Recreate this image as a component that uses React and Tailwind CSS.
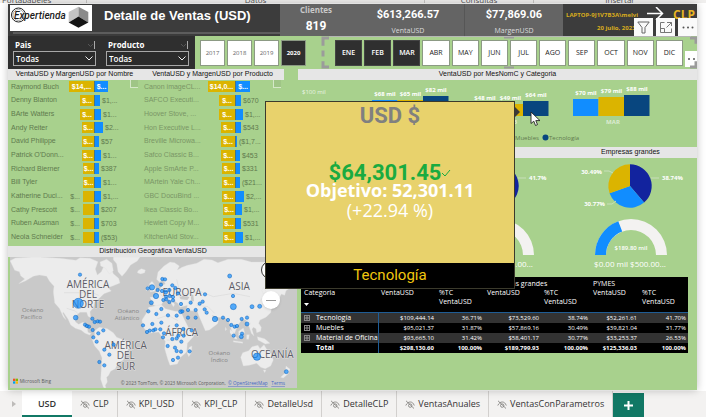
import React from 'react';

const SEGOE = "font-['Open_Sans','Noto_Sans',sans-serif]";
const DIN = "font-[Roboto,sans-serif]";
const ARIAL = "font-['Liberation_Sans',Arial,sans-serif]";

const customers = [
  ['Raymond Buch', 25, '$14,...', 14, '$...', 'full'],
  ['Denny Blanton', 14, '$...', 6, '$1,...'],
  ['BArte Watters', 14, '$...', 7, '$1...'],
  ['Andy Reiter', 12, '$...', 9, '$2...'],
  ['David Philippe', 12, '$...', 5, '$57'],
  ["Patrick O'Donn...", 12, '$...', 7, '$1...'],
  ['Richard Bierner', 11, '$...', 5, '$387'],
  ['Bill Tyler', 11, '$...', 7, '$1...'],
  ['Katherine Duci...', 11, '$...', 7, '$1,...', 'out'],
  ['Cathy Prescott', 11, '$...', 5, '$207', 'out'],
  ['Ruben Ausman', 11, '$...', 5, '$703', 'out'],
  ['Neola Schneider', 11, '$...', 5, '($53)', 'out'],
];

const products = [
  ['Canon imageCL...', 27, '$14,0...', 15, '$...', 'full'],
  ['SAFCO Executi...', 16, '$...', 6, '$670'],
  ['Hoover Stove, ...', 16, '$...', 8, '$1,...'],
  ['Hon Executive L...', 14, '$...', 6, '$543'],
  ['Breville Microwa...', 14, '$...', 2, '($1,7...'],
  ['Safco Classic B...', 14, '$...', 5, '$453'],
  ['Apple SmArte P...', 13, '$...', 5, '$331'],
  ['MArtein Yale Ch...', 13, '$...', 5, '($21...'],
  ['GBC DocuBind ...', 13, '$...', 9, '$2,...'],
  ['Ikea Classic Bo...', 12, '$...', 7, '$1,...'],
  ['Hewlett Copy M...', 12, '$...', 6, '$531'],
  ['KitchenAid Stov...', 12, '$...', 8, '$1,...'],
];

const months = ['ENE', 'FEB', 'MAR', 'ABR', 'MAY', 'JUN', 'JUL', 'AGO', 'SEP', 'OCT', 'NOV', 'DIC'];
const years = ['2017', '2018', '2019', '2020'];

const salesRows = [
  ['Tecnología', '$109,444.14', '36.71%', '$73,529.60', '38.74%', '$52,261.61', '41.70%'],
  ['Muebles', '$95,021.37', '31.87%', '$57,869.16', '30.49%', '$39,821.04', '31.77%'],
  ['Material de Oficina', '$93,665.10', '31.42%', '$58,401.17', '30.77%', '$33,253.37', '26.53%'],
];

const tabs = ['CLP', 'KPI_USD', 'KPI_CLP', 'DetalleUsd', 'DetalleCLP', 'VentasAnuales', 'VentasConParametros'];

const cities = [
  [240, 104, 5], [235, 190, 15], [227, 233, 7], [277, 236, 5], [284, 246, 5], [293, 244, 5], [300, 245, 5],
  [255, 254, 5], [261, 258, 5], [267, 260, 5], [278, 270, 5], [295, 280, 5], [310, 271, 5], [280, 292, 5],
  [290, 305, 5], [341, 314, 5], [313, 329, 5], [328, 344, 5], [298, 366, 5], [313, 376, 5],
  [443, 145, 5], [456, 142, 8], [487, 117, 5], [495, 118, 5], [483, 134, 5], [473, 150, 5], [517, 136, 5],
  [526, 144, 5], [468, 168, 8], [454, 188, 6], [486, 153, 5], [497, 156, 6], [508, 150, 5], [498, 170, 5],
  [509, 168, 5], [519, 171, 5], [490, 180, 5], [499, 178, 5], [508, 186, 5], [519, 181, 5], [534, 160, 5],
  [445, 214, 5], [484, 207, 5], [469, 222, 5], [504, 226, 5], [530, 227, 5], [543, 192, 5], [572, 188, 5],
  [542, 215, 6], [547, 214, 5], [564, 210, 5], [564, 233, 5], [587, 210, 5], [587, 233, 5], [599, 191, 5],
  [608, 185, 5], [615, 163, 5], [614, 208, 5], [620, 218, 5], [645, 237, 8], [669, 233, 5], [684, 240, 5],
  [429, 256, 5], [457, 252, 5], [484, 248, 5], [441, 276, 5], [449, 272, 5], [460, 271, 5], [466, 268, 5],
  [481, 268, 5], [492, 280, 5], [489, 292, 5], [530, 256, 5], [550, 267, 5], [575, 271, 5], [517, 297, 5],
  [530, 295, 5], [535, 287, 5], [551, 287, 5], [544, 305, 5], [503, 318, 5], [525, 323, 5], [530, 333, 5],
  [543, 335, 5], [569, 334, 5], [534, 353, 5], [519, 360, 5], [689, 108, 6], [699, 168, 5], [700, 200, 9],
  [756, 200, 6], [779, 199, 6], [694, 255, 5], [704, 260, 5], [711, 258, 5], [725, 237, 5], [741, 233, 5],
  [741, 252, 6], [701, 287, 5], [726, 281, 5], [724, 290, 6], [771, 350, 11], [859, 395, 6],
];

function Logo() {
  return (
    <svg className="h-[26px] w-[82px] shrink-0 bg-white" viewBox="0 0 82 26" role="img" aria-label="Expertienda">
      <circle cx="8.500" cy="10" r="7" fill="none" stroke="#222" strokeWidth="1" />
      <circle cx="8.500" cy="10" r="5.500" fill="none" stroke="#777" strokeWidth="0.600" />
      <text x="4" y="14" fontFamily="Roboto, sans-serif" fontStyle="italic" fontWeight="500" fontSize="10" fill="#1c1c1c">Expertienda</text>
      <path d="M68.500 1.700 58.700 7v10.500l9.800-6z" fill="#c4c4c4" />
      <path d="M68.500 1.700 78.300 7v10.500l-9.800-6z" fill="#8b8b8b" />
      <path d="M68.500 11.500 78.300 17.500 68.500 22.700 58.700 17.500z" fill="#141414" />
    </svg>
  );
}

function Slicer({ id, label }) {
  return (
    <div className="flex w-[93px] flex-col px-[5px] pt-[3px]">
      <div className="flex h-[12px] items-center justify-between">
        <label htmlFor={id} className="pl-[2px] text-[8px] font-bold leading-[10px] text-white">{label}</label>
        <svg className="h-[8px] w-[9px]" viewBox="0 0 9 8" fill="none" stroke="#777">
          <path d="M1 3l2.500 2.500L6 3" stroke="#555" />
          <path d="M7.500 0v8" stroke="#aaa" />
        </svg>
      </div>
      <div className="relative">
        <select id={id} className="block h-[15px] w-full appearance-none border border-[#a8a8a8] bg-[#2b2b2b] px-[2px] text-[8px] font-semibold leading-[10px] text-white">
          <option>Todas</option>
        </select>
        <svg className="pointer-events-none absolute right-[3px] top-[5px] h-[5px] w-[8px]" viewBox="0 0 8 5" fill="none" stroke="#eee">
          <path d="M.5.500 4 4 7.500.500" />
        </svg>
      </div>
    </div>
  );
}

function PanelTitle({ children }) {
  return (
    <h2 className={`h-[11px] overflow-hidden whitespace-nowrap bg-[#e6e6e6] text-center text-[7px] leading-[9px] text-[#111] ${ARIAL}`}>{children}</h2>
  );
}

function Tornado({ title, rows, compact }) {
  return (
    <section className="relative min-w-0">
      <PanelTitle>{title}</PanelTitle>
      <span className="absolute right-[3px] top-[11px] h-[8px] w-[8px] border-b border-l border-[#d5e8c8] bg-[#9fc586]" />
      <div className={`grid h-[166px] grid-rows-12 pb-[2px] text-[#607a4e] ${ARIAL}`}>
        {rows.map(([name, sale, saleText, margin, marginText, mode]) => (
          <div key={name} className="flex items-center">
            <span className={compact ? 'w-[56px] shrink-0 whitespace-nowrap pl-[3px] text-[7px] leading-[12px] text-[#7a9666]' : 'w-[56px] shrink-0 whitespace-nowrap pl-[3px] text-[7px] leading-[12px]'}>{name}</span>
            <span className={compact ? 'flex w-[38px] shrink-0 justify-end' : 'flex w-[30px] shrink-0 justify-end'}>
              {mode === 'out' && <span className="mr-[3px] text-[7px] leading-[11px]">{saleText}</span>}
              <span className="h-[11px] overflow-hidden whitespace-nowrap bg-[#dbb400] text-center text-[7px] font-bold leading-[11px] text-white" style={{ width: sale }}>
                {mode !== 'out' && saleText}
              </span>
            </span>
            <span className="h-[11px] shrink-0 overflow-hidden border-l border-[#46748a] bg-[#118dff] text-center text-[7px] font-bold leading-[11px] text-white" style={{ width: margin }}>
              {mode === 'full' && marginText}
            </span>
            {mode !== 'full' && <span className="ml-[2px] whitespace-nowrap text-[7px] leading-[11px]">{marginText}</span>}
          </div>
        ))}
      </div>
    </section>
  );
}

function WorldMap() {
  return (
    <svg className="block w-full" viewBox="30 51 861 393" role="img" aria-label="Distribución Geográfica VentaUSD">
      <rect x="30" y="51" width="861" height="393" fill="#c9c9c9" />
      <g fill="#ececec" stroke="#dedede" strokeWidth="1">
        <path d="M30 62l16-8 50-3h24l60 4 48 6 12-8 30 2 24 10-8 22 6 18 12-10 10-22 18 8 8 20 16 14 4 14-20 8-16 6 10 10-22 8-14 14-14 12-4 16-10 12 2 18-8-4-4-12-20 0-12 10-2 18 10 8 12-6 8 2-4 12 10 4 2 12 10 4-6 4-14-6-10-8-18-6-14-10-8-18-14-20-2 2 10 20-8-8-12-26-14-16-4-34 2-16-14-16-8-14-22-4-18 4-24 14-20 8 18-14-12-10-4-12-14-4z" />
        <path d="M340 51h80l-8 12-20 12-14 20-12 14-12-14-4-24-10-12z" />
        <path d="M300 66l20-8 16 12 4 22-12 10-12-18-14-6z" />
        <path d="M414 92l10-6 12 4-2 8-12 4-10-4z" />
        <path d="M284 272l14-10 24 4 18 12 10 14 22 8 18 10-2 14-12 16-6 20-16 8-8 18-14 8-6 12-6 6 2 14-6 10 2 10-8-4-8-24 2-34 2-30-8-20-14-16-8-20 8-12z" />
        <path d="M448 132l8-8 6 8 6 14-4 8-14 2 4-10z" /><path d="M438 142l8-4 2 10-10 4z" />
        <path d="M450 172l16-2-2-10 14-8 8-16 10-4-6-12-12 6-8-8 4-22 18-18 18-12 14 2 14 10-6 12 14-8 16-6 28-6 22-12 24 2 18 8 30-10 40 0 30 8h80l80 0v26l-14 10-14 14-12 10-4 18-12 8-4 14-10-4-8 16 0 18-8 2-6-16-12 4 6 12-4 20-14 14-18 8-4 10 8 12-2 12-12 4-2-12-8-4-4 6 6 20-8-8-6-18-10-22-12-2-14 20-8 22-8-4-8-28-12-14-22-2-18-6 6 12 14 4-4 10-24 18-12 2-20-46-4-12-18-2-14-4 2-12-16 4-6 2-6-12-12-8-8-10 10 22-4 6-12-20-14-2-10 16-14 6-10-6z" />
        <path d="M446 202l38-8 12 12 30 8 16 0 10 22 16 32 20 2-8 20-18 20-2 26-18 16-10 20-22 4-6-16-10-34 2-22-12-16-8-12-30 4-18-20-2-20 14-22z" />
        <path d="M568 322l8-4-2 20-8 12-4-10z" />
        <path d="M722 352l6-14 18-6 10-12 18-4 6 10 12-12 8 14 12 12 8 20-8 18-16 8-14-4-12-12-22 6-18 2z" />
        <path d="M690 268l12 12 10 18-8-2-14-18zM716 274l14-10 4 14-8 14-10-4zM740 284l8 0-2 14-6 0zM772 290l22 6 16 14-14 2-22-12zM700 302l28 4v4l-28-4z" />
        <path d="M784 176l6 8-2 12-16 6-6-4 12-8zM786 152l4-10 8 12-8 8zM740 226l8-2-2 18 6 10-8 2zM676 262l4 6-4 4z" />
        <path d="M858 378l12 10-6 14-14 12-8-2 14-14zM790 390l8 0-4 8z" />
      </g>
      <path d="M538 170l16-4 14 6-6 8-20-2zM572 164l8 0 2 20-8 0z" fill="#c9c9c9" />
      <g fill="none" stroke="#d4d4d4" strokeWidth="1.500">
        <path d="M192 158h86l18 8M200 205l26 8 10 10M468 146l20 24 20-12M530 118l8 34 22 10 40-8 40 16 60-10 50 10M590 196l34 4 20 20M472 236l32-10 30 16M500 300l40 2" />
      </g>
      <g fontFamily="'Open Sans', 'Noto Sans', sans-serif" textAnchor="middle" fill="#5c5c66" stroke="#f2f2f2" strokeWidth="2" paintOrder="stroke" fontSize="30">
        <text x="264" y="143">AMÉRICA</text>
        <text x="264" y="174">DEL</text>
        <text x="264" y="205">NORTE</text>
        <text x="377" y="327">AMÉRICA</text>
        <text x="377" y="358">DEL</text>
        <text x="377" y="389">SUR</text>
        <text x="546" y="167">EUROPA</text>
        <text x="718" y="150">ASIA</text>
        <text x="545" y="289">ÁFRICA</text>
        <text x="817" y="355">OCEANÍA</text>
      </g>
      <g fontFamily="'Open Sans', 'Noto Sans', sans-serif" textAnchor="middle" fill="#858585" fontSize="18">
        <text x="98" y="215">Océano</text>
        <text x="94" y="236">Pacífico</text>
        <text x="385" y="219">Océano</text>
        <text x="381" y="240">Atlántico</text>
        <text x="658" y="345">Océano</text>
        <text x="658" y="366">Índico</text>
      </g>
      <g fill="#118dff" fillOpacity="0.700" stroke="#0f63b8" strokeWidth="1.500">
        {cities.map(([x, y, r]) => <circle key={`${x}-${y}`} cx={x} cy={y} r={r} />)}
      </g>
      <path d="M39 416h7v7h-7z" fill="#f25022" /><path d="M47 416h7v7h-7z" fill="#7fba00" />
      <path d="M39 424h7v7h-7z" fill="#00a4ef" /><path d="M47 424h7v7h-7z" fill="#ffb900" />
      <g fontFamily="'Open Sans', 'Noto Sans', sans-serif" fontSize="14" fill="#5a5a5a">
        <text x="59" y="429">Microsoft Bing</text>
        <text x="677" y="435" textAnchor="end">© 2023 TomTom, © 2023 Microsoft Corporation,</text>
        <a href="#osm"><text x="684" y="435" fill="#4468c4" textDecoration="underline">© OpenStreetMap</text></a>
        <a href="#terms"><text x="814" y="435" fill="#4468c4" textDecoration="underline">Terms</text></a>
      </g>
    </svg>
  );
}

function MonthChart() {
  const groups = [
    { x: 74, label: 'ENE', values: [68, 65, 82] },
    { x: 174, label: 'FEB', values: [48, 49, 64] },
    { x: 275, label: 'MAR', values: [70, 79, 88] },
  ];
  const colors = ['#118dff', '#dbb400', '#08467f'];
  return (
    <svg className="block w-full" viewBox="0 0 399 67" fontFamily="'Open Sans', 'Noto Sans', sans-serif" fontSize="6">
      <text x="4" y="14" fill="#eaf4e3">$100 mil</text>
      {groups.map((g) => (
        <g key={g.label} fontWeight="700" textAnchor="middle" fill="#fff">
          {g.values.map((v, i) => {
            const h = Math.round(v * 0.24);
            return (
              <g key={v}>
                <rect x={g.x + i * 25.5} y={36 - h} width="25.500" height={h} fill={colors[i]} />
                <text x={g.x + i * 25.5 + 13} y={32 - h}>{`$${v} mil`}</text>
              </g>
            );
          })}
          <text x={g.x + 40} y="44" fill="#dcebd2">{g.label}</text>
        </g>
      ))}
      <g fill="#607a4e">
        <circle cx="144" cy="57.500" r="3" fill="#118dff" />
        <text x="148" y="60">Material de Oficina</text>
        <circle cx="212" cy="57.500" r="3" fill="#dbb400" />
        <text x="217" y="60">Muebles</text>
        <circle cx="247.500" cy="57.500" r="3" fill="#08467f" />
        <text x="251" y="60">Tecnología</text>
      </g>
    </svg>
  );
}

function arcPoint(cx, cy, r, turn) {
  const a = turn * Math.PI * 2;
  return `${(cx + r * Math.sin(a)).toFixed(2)} ${(cy - r * Math.cos(a)).toFixed(2)}`;
}

function SegmentPanel({ shares, right, upper, lower, amount, range }) {
  const colors = ['#12239e', '#118dff', '#dbb400'];
  const cx = 66;
  const cy = 28;
  const r = 21.7;
  let start = 0;
  const slices = shares.map((share, i) => {
    const end = start + share;
    const d = `M${cx} ${cy}L${arcPoint(cx, cy, r, start)}A${r} ${r} 0 0 1 ${arcPoint(cx, cy, r, end)}Z`;
    start = end;
    return <path key={colors[i]} d={d} fill={colors[i]} />;
  });
  return (
    <svg className="block w-full" viewBox="0 0 133 119" fontFamily="'Open Sans', 'Noto Sans', sans-serif" fontSize="6" fill="#fff">
      {slices}
      <g fill="none" stroke="#c8dfb9" strokeWidth="1">
        <path d="M87 20h8M40 13h5l4 2M43 46h5l4-3" />
      </g>
      <text x="98" y="22" fontWeight="700">{right}</text>
      <text x="38" y="16" fontWeight="700" textAnchor="end">{upper}</text>
      <text x="41" y="48" fontWeight="700" textAnchor="end">{lower}</text>
      <path d="M31 97A36 36 0 0 1 103 97H92A25 25 0 0 0 42 97Z" fill="#f3f2f1" />
      <path d="M31 97A36 36 0 0 1 54.300 63.300L58.200 73.600A25 25 0 0 0 42 97Z" fill="#118dff" />
      <text x="67" y="92" textAnchor="middle" fontWeight="600">{amount}</text>
      <text x="66" y="109" textAnchor="middle" fontSize="8">{range}</text>
    </svg>
  );
}

function SalesTable() {
  const value = 'pr-[2px] text-right text-[6px]';
  return (
    <table className="w-full table-fixed border-collapse bg-black text-[7px] leading-[10px] text-white">
      <colgroup>
        <col className="w-[77px]" /><col className="w-[58px]" /><col className="w-[48px]" />
        <col className="w-[57px]" /><col className="w-[49px]" /><col className="w-[49px]" /><col className="w-[49px]" />
      </colgroup>
      <thead className="text-left align-top text-[7px] leading-[9px]">
        <tr className="h-[11px]">
          <th className="font-normal" />
          <th colSpan="2" className="pl-[3px] pt-[2px] font-normal">Consumidor</th>
          <th colSpan="2" className="whitespace-nowrap pl-[3px] pt-[2px] font-normal">Empresas grandes</th>
          <th colSpan="2" className="pl-[3px] pt-[2px] font-normal">PYMES</th>
        </tr>
        <tr className="h-[24px] border-b border-[#1f5c94]">
          <th className="pl-[3px] font-normal">
            Categoria
            <svg className="mt-[6px] block h-[3px] w-[5px]" viewBox="0 0 5 3"><path d="M0 0h5L2.500 3z" fill="#fff" /></svg>
          </th>
          {[0, 1, 2].map((n) => (
            <React.Fragment key={n}>
              <th className="pl-[3px] font-normal">VentaUSD</th>
              <th className="pl-[3px] font-normal">%TC<br />VentaUSD</th>
            </React.Fragment>
          ))}
        </tr>
      </thead>
      <tbody>
        {salesRows.map(([name, ...cells]) => (
          <tr key={name} className="h-[10px] odd:bg-[#333333]">
            <th className="whitespace-nowrap border-r border-[#1f5c94] text-left font-normal">
              <span className="flex items-center">
                <button type="button" aria-label={`Expandir ${name}`} className="ml-[3px] mr-[6px] flex h-[6px] w-[6px] items-center justify-center border border-[#8a8a8a]">
                  <svg className="h-[4px] w-[4px]" viewBox="0 0 4 4" stroke="#aaa" strokeWidth="0.800"><path d="M2 0v4M0 2h4" /></svg>
                </button>
                {name}
              </span>
            </th>
            {cells.map((c) => <td key={c} className={value}>{c}</td>)}
          </tr>
        ))}
        <tr className="h-[10px] font-bold">
          <th className="border-r border-[#1f5c94] pl-[15px] text-left">Total</th>
          {['$298,130.60', '100.00%', '$189,799.93', '100.00%', '$125,336.03', '100.00%'].map((c, i) => <td key={i} className={value}>{c}</td>)}
        </tr>
      </tbody>
    </table>
  );
}

function HiddenIcon() {
  return (
    <svg className="h-[9px] w-[10px]" viewBox="0 0 10 9" fill="none" stroke="#7a7876" strokeWidth="0.800">
      <path d="M.8 5.500C2 2.800 3.600 2 5.300 2s3 1 4 3.500" />
      <circle cx="5.200" cy="5.600" r="1.700" />
      <path d="M1 .800l8 7.700" />
    </svg>
  );
}

export default function App() {
  return (
    <div className={`flex min-h-screen w-full flex-col overflow-hidden bg-white ${SEGOE}`}>
      <div className="flex h-[4px] items-end overflow-hidden border-b border-white bg-[#f0efee] text-[8px] leading-[6px] text-[#555]">
        <span className="w-[87px] border-r border-[#c8c6c4] pl-[2px]">Portapapeles</span>
        <span className="flex-1 border-r border-[#c8c6c4] text-center">Datos</span>
        <span className="w-[109px] border-r border-[#c8c6c4] text-center">Consultas</span>
        <span className="w-[172px] text-center">Insertar</span>
      </div>

      <main className="relative ml-[8px] mr-[9px] flex flex-1 flex-col bg-[#a8d18d] shadow-[0_0_8px_rgba(0,0,0,0.25)]">
        <header className="flex h-[32px] bg-[#3c3c3c] text-white">
          <div className="flex w-[272px] flex-col">
            <div className="flex h-[28px] items-start gap-[12px] pl-[2px] pt-px">
              <Logo />
              <h1 className={`whitespace-nowrap text-[13px] font-bold leading-[22px] ${ARIAL}`}>Detalle de Ventas (USD)</h1>
            </div>
            <div className="ml-[5px] h-[2px] bg-[#5d5d5d]" />
          </div>
          <div className="grid flex-1 grid-cols-[72fr_113fr_98fr] bg-[#646464] text-center">
            <div>
              <div className="text-[8px] font-bold leading-[11px] text-[#c9c9c9]">Clientes</div>
              <div className={`text-[12px] font-bold leading-[22px] ${DIN}`}>819</div>
            </div>
            <div className="border-r border-[#565656]">
              <div className={`text-[11px] font-bold leading-[22px] ${DIN}`}>$613,266.57</div>
              <div className="text-[7px] leading-[9px] text-[#dcdcdc]">VentaUSD</div>
            </div>
            <div>
              <div className={`text-[11px] font-bold leading-[22px] ${DIN}`}>$77,869.06</div>
              <div className="text-[7px] leading-[9px] text-[#dcdcdc]">MargenUSD</div>
            </div>
          </div>
          <div className="w-[134px] text-[#d9ac1c]">
            <div className="flex h-[20px] items-center pl-[3px] pr-[2px] pt-px">
              <span className="whitespace-nowrap text-[6px] font-bold leading-[8px]">LAPTOP-9J1V7B3A\melvi</span>
              <svg className="ml-auto mr-[9px] h-[15px] w-[17px] shrink-0" viewBox="0 0 17 15" fill="none" stroke="#fff" strokeWidth="1.500"><path d="M0 6.500h15.500M9 0l6.500 6.500L9 13" /></svg>
              <a href="#clp" className="text-[12px] font-bold leading-[14px] text-[#e6b422]">CLP</a>
            </div>
            <div className="pl-[34px] text-[6px] font-bold leading-[8px]">20 julio, 2023</div>
          </div>
        </header>

        <div className="flex h-[33px]">
          <div className="flex w-[187px] bg-[#2f2f2f]">
            <Slicer id="pais" label="Pais" />
            <Slicer id="producto" label="Producto" />
          </div>
          <div className="flex w-[126px] gap-[2px] pl-[5px] pt-[4px]">
            {years.map((y) => (
              <button key={y} type="button" aria-pressed={y === '2020'} className="h-[26px] w-[25px] border border-[#8c9a84] bg-white text-[6px] text-[#666] aria-pressed:bg-[#2f2f2f] aria-pressed:font-bold aria-pressed:text-white">{y}</button>
            ))}
          </div>
          <div className="relative flex-1 pl-[14px] pr-[14px] pt-[4px]">
            <div className="grid grid-cols-12 gap-[2px]">
              {months.map((m, i) => (
                <button key={m} type="button" aria-pressed={i < 3} className="h-[26px] border border-[#8c9a84] bg-white text-[7px] text-[#222] aria-pressed:border-[#444] aria-pressed:bg-[#2f2f2f] aria-pressed:font-semibold aria-pressed:text-white">{m}</button>
              ))}
            </div>
            <div className="absolute bottom-[2px] right-0 flex h-[16px] w-[12px] items-center justify-center bg-white">
              <svg className="h-[2px] w-[7px]" viewBox="0 0 7 2" fill="#555"><circle cx="1" cy="1" r="1" /><circle cx="6" cy="1" r="1" /></svg>
            </div>
            <svg className="pointer-events-none absolute inset-0 h-full w-full" viewBox="0 0 376 34" preserveAspectRatio="none" fill="none" stroke="#9b9b9b" strokeWidth="3">
              <path d="M8 2H2V10M2 15V21M2 26V32H8M369 2H375V8M375 26V32H369" />
              <path d="M183 1.500h10M183 32.500h10" strokeWidth="2" />
              <path d="M8 .500H370" stroke="#b7b7b7" strokeWidth="1" />
            </svg>
          </div>
        </div>

        <div className="flex flex-1">
          <div className="w-[290px] shrink-0">
            <div className="grid grid-cols-[133px_143px]">
              <Tornado title="VentaUSD y MargenUSD por Nombre" rows={customers} />
              <Tornado title="VentaUSD y MargenUSD por Producto" rows={products} compact />
            </div>
            <section className="relative">
              <PanelTitle>Distribución Geográfica VentaUSD</PanelTitle>
              <div className="pb-px pl-[2px] pr-px"><WorldMap /></div>
              <button type="button" aria-label="Acercar" className="absolute right-[19px] top-[15px] h-[18px] w-[18px] rounded-full border border-[#333] bg-white" />
              <button type="button" aria-label="Alejar" className="absolute right-[18px] top-[45px] flex h-[18px] w-[18px] items-center justify-center rounded-full bg-white shadow">
                <span className="h-px w-[10px] bg-[#999]" />
              </button>
            </section>
          </div>

          <div className="min-w-0 flex-1">
            <PanelTitle>VentaUSD por MesNomC y Categoria</PanelTitle>
            <MonthChart />
            <div className="grid grid-cols-3">
              <PanelTitle>Consumidor</PanelTitle>
              <PanelTitle>PYMES</PanelTitle>
              <PanelTitle>Empresas grandes</PanelTitle>
            </div>
            <div className="grid grid-cols-3">
              <SegmentPanel shares={[0.3671, 0.3142, 0.3187]} right="36.71%" upper="31.87%" lower="31.42%" amount="$298.13 mil" range="$0.00 mil $500.00..." />
              <SegmentPanel shares={[0.417, 0.2653, 0.3177]} right="41.7%" upper="31.77%" lower="26.53%" amount="$125.34 mil" range="$0.00 mil $500.00..." />
              <SegmentPanel shares={[0.3874, 0.3077, 0.3049]} right="38.74%" upper="30.49%" lower="30.77%" amount="$189.80 mil" range="$0.00 mil $500.00..." />
            </div>
            <div className="pl-[3px] pr-[9px]"><SalesTable /></div>
          </div>
        </div>

        <div className="absolute right-0 top-[14px] flex gap-[3px]">
          <button type="button" aria-label="Filtros" className="flex h-[18px] w-[19px] items-center justify-center bg-[#fafafa]">
            <svg className="h-[13px] w-[13px]" viewBox="0 0 13 13" fill="none" stroke="#666"><path d="M.8 1h11.400L8 6.500V12H5V6.500z" /></svg>
          </button>
          <button type="button" aria-label="Modo de enfoque" className="flex h-[18px] w-[19px] items-center justify-center bg-[#fafafa]">
            <svg className="h-[11px] w-[12px]" viewBox="0 0 12 11" fill="none" stroke="#777"><path d="M4.500.500H.500v10h11V6.500M7 .500h4.500V4M11.500.500 6.500 5.500M.5 6.500h4v4" /></svg>
          </button>
          <button type="button" aria-label="Más opciones" className="flex h-[18px] w-[19px] items-center justify-center bg-[#fafafa]">
            <svg className="h-[3px] w-[12px]" viewBox="0 0 12 3" fill="#555"><circle cx="1.500" cy="1.500" r="1" /><circle cx="6" cy="1.500" r="1" /><circle cx="10.500" cy="1.500" r="1" /></svg>
          </button>
        </div>

        <div role="tooltip" className="absolute left-[257px] top-[97px] flex h-[188px] w-[250px] flex-col border border-[#3b3a2c] bg-[#e8d26c] text-center">
          <div className={`pt-[2px] text-[22px] font-bold leading-[24px] text-[#808080] ${DIN}`}>USD $</div>
          <div className={`mt-[33px] flex items-center justify-center text-[22px] font-bold leading-[24px] text-[#1aab40] ${DIN}`}>
            $64,301.45
            <svg className="h-[8px] w-[10px]" viewBox="0 0 10 8" fill="none" stroke="#1aab40"><path d="M1 4l3 3 5-6" /></svg>
          </div>
          <div className="mt-[-5px] text-[18px] font-bold leading-[20px] text-white">Objetivo: 52,301.11</div>
          <div className="text-[18px] leading-[20px] text-white">(+22.94 %)</div>
          <div className={`mt-auto h-[25px] bg-black text-[15px] leading-[25px] text-[#f2c80f] ${DIN}`}>Tecnología</div>
        </div>
        <svg className="absolute left-[507px] top-[103px] h-[10px] w-[5px]" viewBox="0 0 5 10"><path d="M0 0l5 5-5 5z" fill="#3b3a38" /></svg>
        <svg className="absolute left-[522px] top-[107px] h-[16px] w-[11px]" viewBox="0 0 11 16" fill="#fff" stroke="#222" strokeWidth="0.900"><path d="M1 1v11.500l2.800-2.300 1.700 4.300 2-.9-1.700-4H10z" /></svg>
      </main>

      <nav className="mt-px flex h-[26px] items-stretch overflow-hidden bg-[#f3f2f1] text-[9px] text-[#333]">
        <button type="button" aria-label="Siguiente" className="flex w-[22px] items-center justify-center pl-[6px]">
          <svg className="h-[6px] w-[4px]" viewBox="0 0 4 6"><path d="M0 0l4 3-4 3z" fill="#bdbbb9" /></svg>
        </button>
        <button type="button" className="w-[50px] border-b-2 border-[#117865] bg-white pt-[2px] font-semibold">USD</button>
        {tabs.map((t) => (
          <button key={t} type="button" className="flex items-center gap-[3px] whitespace-nowrap border-r border-[#d2d0ce] px-[8px]">
            <HiddenIcon />
            {t}
          </button>
        ))}
        <button type="button" aria-label="Nueva página" className="mt-[2px] flex w-[31px] items-center justify-center bg-[#117865]">
          <svg className="h-[9px] w-[9px]" viewBox="0 0 9 9" stroke="#fff" strokeWidth="2"><path d="M4.500 0v9M0 4.500h9" /></svg>
        </button>
      </nav>
    </div>
  );
}
